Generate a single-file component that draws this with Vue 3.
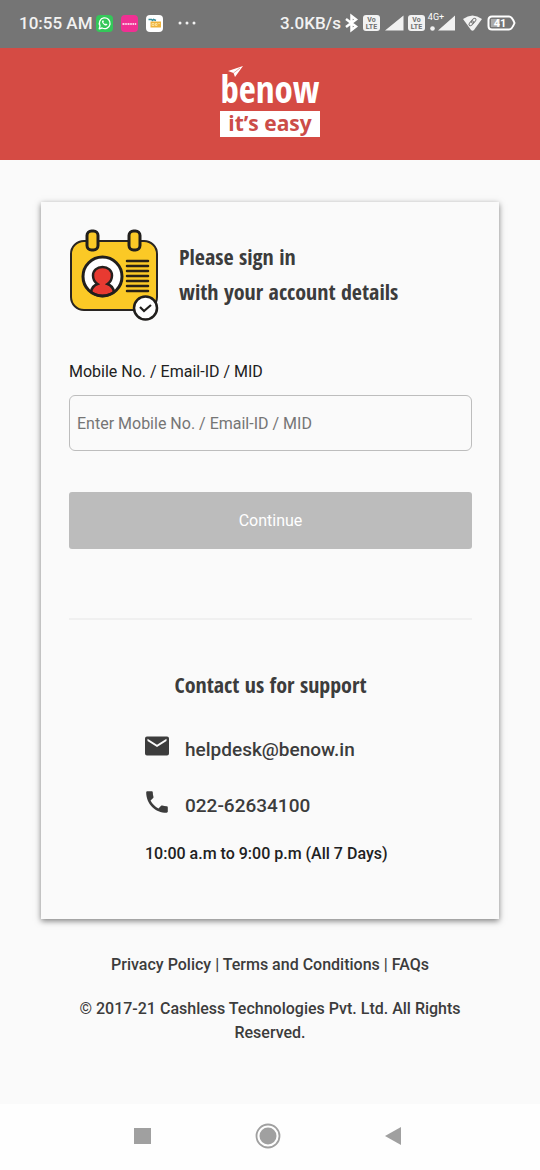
<script setup>
import { ref } from 'vue'

const account = ref('')
const hours = '10:00 a.m to 9:00 p.m (All 7 Days)'
const ruleRows = [32, 37, 42, 47, 52, 57, 62]
</script>

<template>
  <div class="screen">
    <div class="status">
      <div class="status-side">
        <span class="status-text">10:55 AM</span>
        <svg class="app-icon first" viewBox="0 0 17 17" aria-hidden="true">
          <rect width="17" height="17" rx="4" fill="#34c759" />
          <path d="M3.2 13.8l.8-2.9a5.4 5.4 0 1 1 2.100 2.100z" fill="none" stroke="#fff" stroke-width="1.300" stroke-linejoin="round" />
          <path d="M6.500 5.400c-.9.700-.6 2 .8 3.500s2.900 2 3.900 1.100l.2-.8-1.500-.8-.7.700c-.9-.3-1.600-1-1.900-1.800l.6-.7-.6-1.300z" fill="#fff" />
        </svg>
        <svg class="app-icon" viewBox="0 0 17 17" aria-hidden="true">
          <rect width="17" height="17" rx="4" fill="#f02f93" />
          <path d="M1.500 9h2M4.200 9h1.600M6.500 9h2M9.200 9h1.600M11.500 9h1.500M13.700 9h1.500" stroke="#fff" stroke-width="1.600" />
        </svg>
        <svg class="app-icon" viewBox="0 0 17 17" aria-hidden="true">
          <rect width="17" height="17" rx="4" fill="#fff" />
          <path d="M2.500 4.500h3l1 1 1-1 2.500 1" fill="none" stroke="#358b9b" stroke-width="1.500" />
          <path d="M4.500 6.500h10.500v6h-10.500z" fill="#efb33a" />
          <path d="M6 8.500h2v2h-2zM9.500 8.500h1.500v2H9.500zM12.300 8.500h1.500" fill="none" stroke="#fff1bd" stroke-width=".7" />
        </svg>
        <svg class="more" viewBox="0 0 20 6" aria-hidden="true">
          <g fill="#f2f2f2"><circle cx="3" cy="3" r="1.500" /><circle cx="10" cy="3" r="1.500" /><circle cx="17" cy="3" r="1.500" /></g>
        </svg>
      </div>
      <div class="status-side">
        <span class="status-text">3.0KB/s</span>
        <svg class="signals" viewBox="0 0 175 24" aria-hidden="true">
          <path d="M5 8l10 7.500-4.500 3.500V5L15 8.500 5 16" fill="none" stroke="#fff" stroke-width="2.500" />
          <g fill="#f2f2f2">
            <rect x="22" y="4" width="17" height="16" rx="3" />
            <rect x="67" y="4" width="17" height="16" rx="3" />
            <path d="M44 19.500L62.500 4.500v15zM97 19.500L114 4.500v15z" />
            <circle cx="91.500" cy="17.500" r="2.300" />
            <path d="M122 8q9.500-7 19 0l-8 11q-1.500 1.500-3 0z" />
          </g>
          <g font-family="Roboto, sans-serif" font-weight="700" text-anchor="middle">
            <g font-size="7" fill="#707070">
              <text x="30.500" y="11">Vo</text><text x="30.500" y="18">LTE</text>
              <text x="75.500" y="11">Vo</text><text x="75.500" y="18">LTE</text>
            </g>
            <text x="95" y="9" font-size="9" font-weight="400" fill="#fff">4G+</text>
          </g>
          <g fill="none" stroke="#777" stroke-width="1" transform="rotate(42 131.500 11)">
            <rect x="130" y="6.500" width="3" height="5.500" rx="1.500" /><rect x="130" y="10" width="3" height="5.500" rx="1.500" />
          </g>
          <path d="M151 5.500h17q3 0 5.500 6.500-2.500 6.500-5.500 6.500h-17q-3.500 0-3.500-3.500V9q0-3.500 3.500-3.500z" fill="none" stroke="#fff" stroke-width="2" />
          <rect x="150" y="8" width="9" height="8" fill="#ababab" />
          <text x="159" y="16" font-size="11" font-weight="700" text-anchor="middle" fill="#fff" font-family="Roboto, sans-serif">41</text>
        </svg>
      </div>
    </div>

    <header class="header">
      <div class="logo">
        <span class="logo-name">benow</span>
        <span class="logo-tag">it’s easy</span>
        <svg class="plane" viewBox="0 0 15 11" aria-hidden="true">
          <path d="M0 5L15 0 7 11 5.500 7z" fill="#fff" />
          <path d="M5.500 7L12 2" stroke="#d54b44" stroke-width=".5" />
        </svg>
      </div>
    </header>

    <main class="card">
      <div class="intro">
        <svg class="badge" viewBox="0 -1 90 92" aria-hidden="true">
          <rect x="2" y="12" width="86" height="69" rx="13" fill="#fbc926" stroke="#292522" stroke-width="2" />
          <g fill="#fbc926" stroke="#211f1d" stroke-width="3">
            <rect x="18" y="2" width="11" height="19" rx="4.500" /><rect x="60" y="2" width="11" height="19" rx="4.500" />
          </g>
          <circle cx="33.500" cy="47.500" r="19.500" fill="#fff" />
          <path d="M22 63q1-6 6.500-8-4.500-3-4.500-8.500c0-5 4-8.500 9.500-8.500s9.500 3.500 9.500 8.500q0 5.500-4.500 8.500 5.500 2 6.500 8-11.500 8-23 0z" fill="#e83a31" stroke="#26201e" stroke-width="2.500" />
          <circle cx="33.500" cy="47.500" r="19.500" fill="none" stroke="#211f1d" stroke-width="3" />
          <path v-for="y in ruleRows" :key="y" :d="`M58 ${y}h21`" stroke="#292116" stroke-width="2.500" stroke-linecap="round" />
          <circle cx="76.500" cy="79" r="11.500" fill="#fff" stroke="#211f1d" stroke-width="2.500" />
          <path d="M71 78l4 4 7-6" fill="none" stroke="#211f1d" stroke-width="2.200" />
        </svg>
        <h1 class="title">Please sign in<br>with your account details</h1>
      </div>

      <form class="form" @submit.prevent>
        <label class="label" for="account">Mobile No. / Email-ID / MID</label>
        <input id="account" v-model="account" class="field" type="text" placeholder="Enter Mobile No. / Email-ID / MID">
        <button class="submit" type="submit">Continue</button>
      </form>

      <section class="support">
        <h2 class="title">Contact us for support</h2>
        <div class="contacts">
          <a class="contact" href="mailto:helpdesk@benow.in">
            <svg class="contact-icon" viewBox="0 0 24 24" aria-hidden="true">
              <path d="M22 2.500H2a2 2 0 0 0-2 2v15a2 2 0 0 0 2 2h20a2 2 0 0 0 2-2v-15a2 2 0 0 0-2-2zm-.5 4.500L12 13 2.500 7V4.700L12 10.700l9.500-6z" />
            </svg>
            <span>helpdesk@benow.in</span>
          </a>
          <a class="contact" href="tel:02262634100">
            <svg class="contact-icon" viewBox="2 2 20 20" aria-hidden="true">
              <path d="M6.620 10.790c1.440 2.830 3.760 5.140 6.590 6.590l2.200-2.200c.27-.27.67-.36 1.020-.24 1.120.37 2.330.57 3.570.57.550 0 1 .45 1 1V20c0 .55-.45 1-1 1-9.390 0-17-7.610-17-17 0-.55.45-1 1-1h3.500c.55 0 1 .45 1 1 0 1.250.2 2.450.57 3.570.11.350.03.740-.25 1.020z" />
            </svg>
            <span>022-62634100</span>
          </a>
          <p class="hours">{{ hours }}</p>
        </div>
      </section>
    </main>

    <footer class="footer">
      <nav><a href="#privacy">Privacy Policy</a> | <a href="#terms">Terms and Conditions</a> | <a href="#faqs">FAQs</a></nav>
      <p class="copyright">© 2017-21 Cashless Technologies Pvt. Ltd. All Rights Reserved.</p>
    </footer>

    <div class="system-nav">
      <button class="nav-button" type="button" aria-label="Recent apps">
        <svg viewBox="0 0 26 26"><rect x="5" y="5" width="17" height="16" /></svg>
      </button>
      <button class="nav-button" type="button" aria-label="Home">
        <svg viewBox="0 0 26 26"><circle cx="13" cy="13" r="8.500" /><circle cx="13" cy="13" r="11.500" fill="none" stroke="#a0a0a0" stroke-width="1.800" /></svg>
      </button>
      <button class="nav-button" type="button" aria-label="Back">
        <svg viewBox="0 0 26 26"><path d="M5 13L21 4v18z" /></svg>
      </button>
    </div>
  </div>
</template>

<style>
body {
  margin: 0;
  background: #fafafa;
}
</style>

<style scoped>
.screen {
  display: flex;
  flex-direction: column;
  min-height: 100vh;
  font-family: Roboto, "Liberation Sans", sans-serif;
  font-size: 16px;
  line-height: 24px;
  color: #3c3c3c;
}
.screen * {
  box-sizing: border-box;
}
.status {
  display: flex;
  justify-content: space-between;
  align-items: center;
  height: 48px;
  padding: 0 24px 2px 19px;
  background: #757575;
}
.status-side {
  display: flex;
  align-items: center;
}
.status-text {
  font-size: 17px;
  font-weight: 500;
  color: #f2f2f2;
}
.app-icon {
  width: 17px;
  height: 17px;
  margin-left: 8px;
}
.app-icon.first {
  margin-left: 3px;
}
.more {
  width: 20px;
  height: 6px;
  margin-left: 14px;
}
.signals {
  width: 175px;
  height: 24px;
}
.header {
  display: flex;
  justify-content: center;
  padding: 18px 0 23px;
  background: #d54b44;
}
.logo {
  position: relative;
  display: flex;
  flex-direction: column;
  width: 100px;
}
.logo-name {
  height: 45px;
  font-family: "Open Sans Condensed", "Roboto Condensed", "Liberation Sans Narrow", sans-serif;
  font-size: 37px;
  font-weight: 700;
  line-height: 46px;
  text-align: center;
  color: #fff;
}
.logo-tag {
  height: 26px;
  font-family: "Open Sans", "Noto Sans", sans-serif;
  font-size: 21px;
  font-weight: 700;
  line-height: 24px;
  text-align: center;
  white-space: nowrap;
  color: #cc4c48;
  background: #fff;
}
.plane {
  position: absolute;
  top: 0;
  left: 8px;
  width: 15px;
  height: 11px;
}
.card {
  margin: 42px 41px 0;
  padding: 26px 27px 53px 28px;
  background: #fafafa;
  box-shadow: 0 2px 6px rgba(0, 0, 0, 0.5);
}
.intro {
  display: flex;
  align-items: center;
  gap: 20px;
}
.badge {
  flex: none;
  width: 90px;
  height: 92px;
  overflow: visible;
}
.title {
  margin: 0;
  font-family: "Open Sans Condensed", "Roboto Condensed", "Liberation Sans Narrow", sans-serif;
  font-size: 22px;
  font-weight: 400;
  line-height: 35px;
  color: #3c3c3c;
}
.form {
  display: flex;
  flex-direction: column;
  padding-top: 40px;
}
.label {
  color: #212121;
}
.field {
  width: 100%;
  height: 56px;
  margin-top: 11px;
  padding: 0 7px;
  font: inherit;
  color: #212121;
  background: transparent;
  border: 1px solid #bdbdbd;
  border-radius: 6px;
}
.field::placeholder {
  color: #757575;
  opacity: 1;
}
.submit {
  height: 57px;
  margin-top: 41px;
  padding: 0;
  font: inherit;
  color: #fff;
  background: #bcbcbc;
  border: 0;
  border-radius: 3px;
}
.support {
  display: flex;
  flex-direction: column;
  align-items: center;
  margin-top: 69px;
  padding-top: 47px;
  border-top: 2px solid #f0f0f0;
}
.contacts {
  display: flex;
  flex-direction: column;
  gap: 32px;
  min-width: 251px;
  margin-top: 32px;
}
.contact {
  display: flex;
  gap: 16px;
  font-size: 19px;
  font-weight: 500;
  line-height: 32px;
  height: 24px;
  color: #3c3c3c;
  text-decoration: none;
}
.contact-icon {
  width: 24px;
  height: 24px;
  fill: #3c3c3c;
}
.hours {
  margin: -4px 0 0;
  font-weight: 500;
  color: #212121;
}
.footer {
  padding: 34px 60px 0;
  font-weight: 500;
  text-align: center;
}
.footer a {
  color: inherit;
  text-decoration: none;
}
.copyright {
  margin: 20px 0 0;
}
.system-nav {
  display: flex;
  justify-content: space-between;
  align-items: center;
  height: 66px;
  margin-top: auto;
  padding: 0 134px 2px 129px;
  background: #fefefe;
}
.nav-button {
  width: 26px;
  height: 26px;
  padding: 0;
  background: none;
  border: 0;
}
.nav-button svg {
  display: block;
  width: 26px;
  height: 26px;
  fill: #a0a0a0;
}
</style>
